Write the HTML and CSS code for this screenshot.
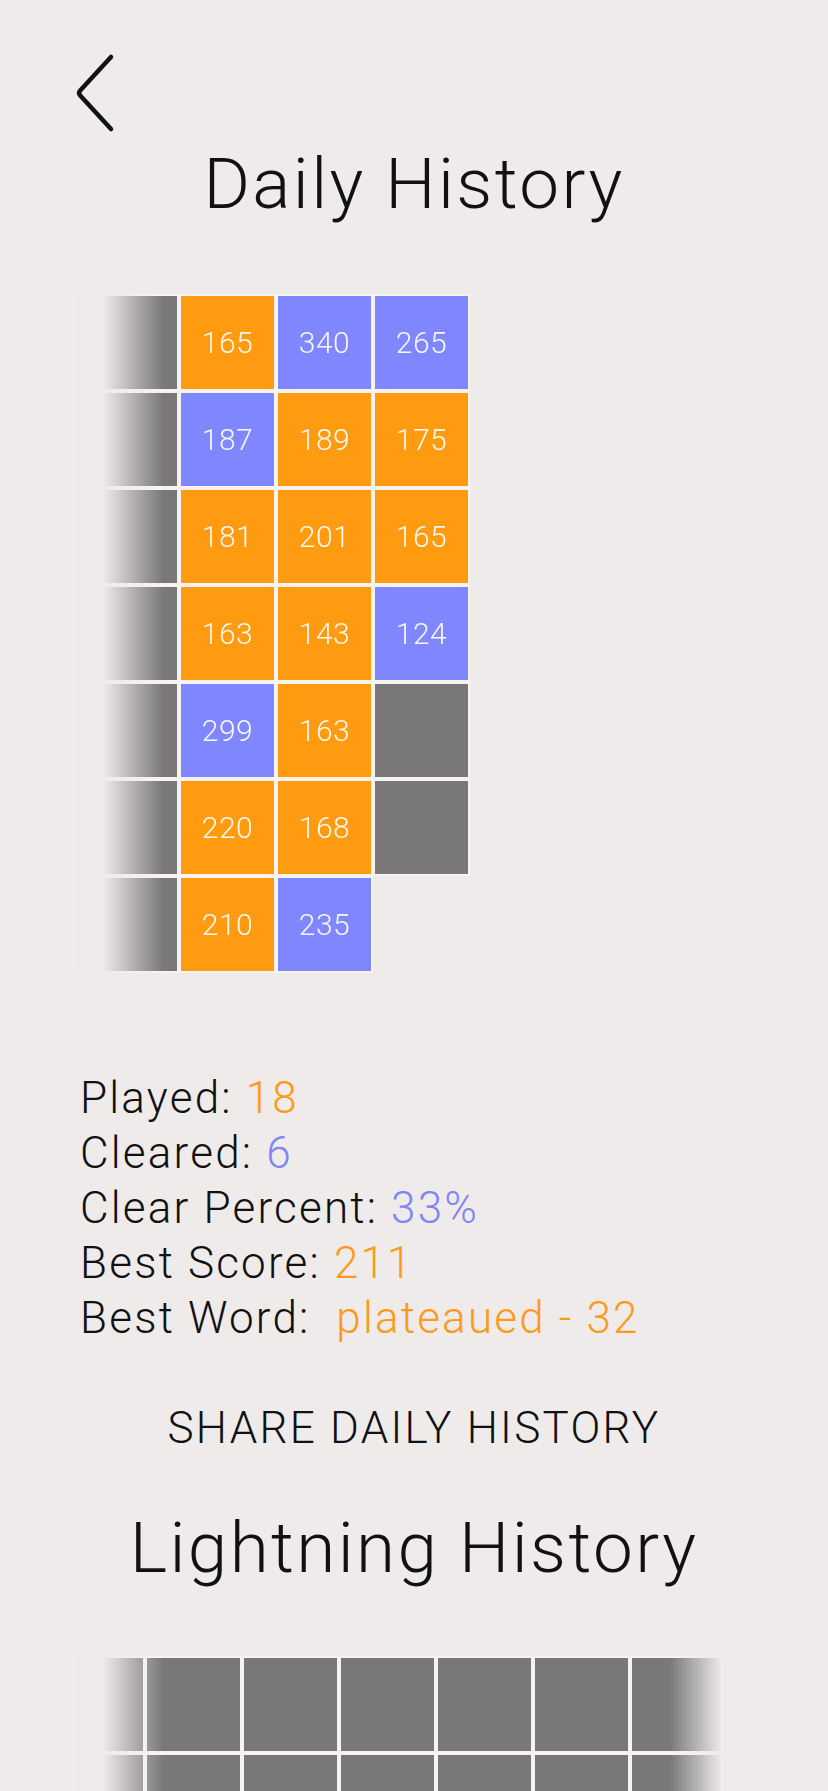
FILE: index.html
```html
<!DOCTYPE html>
<html lang="en">
<head>
<meta charset="utf-8">
<title>Daily History</title>
<link rel="stylesheet" href="styles.css">
</head>
<body>
<div class="screen">
  <div class="topbar">
    <svg class="back" width="50" height="86" viewBox="0 0 50 86" aria-label="Back">
      <path d="M41 7 L10.2 40.6 Q8 43 10.2 45.4 L41 79" fill="none" stroke="#111" stroke-width="4.5" stroke-linecap="round" stroke-linejoin="round"/>
    </svg>
  </div>

  <h1 class="title">Daily History</h1>

  <div class="frame daily">
    <div class="scroller">
      <div class="track">
        <div class="cell g"></div><div class="cell g"></div><div class="cell g"></div><div class="cell g"></div><div class="cell g"></div><div class="cell g"></div><div class="cell g"></div>
        <div class="cell o">165</div><div class="cell b">187</div><div class="cell o">181</div><div class="cell o">163</div><div class="cell b">299</div><div class="cell o">220</div><div class="cell o">210</div>
        <div class="cell b">340</div><div class="cell o">189</div><div class="cell o">201</div><div class="cell o">143</div><div class="cell o">163</div><div class="cell o">168</div><div class="cell b">235</div>
        <div class="cell b">265</div><div class="cell o">175</div><div class="cell o">165</div><div class="cell b">124</div><div class="cell g"></div><div class="cell g"></div><div class="cell e"></div>
      </div>
    </div>
  </div>

  <div class="stats">
    <div class="stat">Played: <span class="orange">18</span></div>
    <div class="stat">Cleared: <span class="blue">6</span></div>
    <div class="stat">Clear Percent: <span class="blue">33%</span></div>
    <div class="stat">Best Score: <span class="orange">211</span></div>
    <div class="stat">Best Word:&nbsp; <span class="orange">plateaued - 32</span></div>
  </div>

  <div class="share">SHARE DAILY HISTORY</div>

  <h2 class="title second">Lightning History</h2>

  <div class="frame lightning">
    <div class="scroller">
      <div class="track shifted">
        <div class="cell g"></div><div class="cell g"></div><div class="cell g"></div><div class="cell g"></div><div class="cell g"></div><div class="cell g"></div><div class="cell g"></div>
        <div class="cell g"></div><div class="cell g"></div><div class="cell g"></div><div class="cell g"></div><div class="cell g"></div><div class="cell g"></div><div class="cell g"></div>
        <div class="cell g"></div><div class="cell g"></div><div class="cell g"></div><div class="cell g"></div><div class="cell g"></div><div class="cell g"></div><div class="cell g"></div>
        <div class="cell g"></div><div class="cell g"></div><div class="cell g"></div><div class="cell g"></div><div class="cell g"></div><div class="cell g"></div><div class="cell g"></div>
        <div class="cell g"></div><div class="cell g"></div><div class="cell g"></div><div class="cell g"></div><div class="cell g"></div><div class="cell g"></div><div class="cell g"></div>
        <div class="cell g"></div><div class="cell g"></div><div class="cell g"></div><div class="cell g"></div><div class="cell g"></div><div class="cell g"></div><div class="cell g"></div>
        <div class="cell g"></div><div class="cell g"></div><div class="cell g"></div><div class="cell g"></div><div class="cell g"></div><div class="cell g"></div><div class="cell g"></div>
        <div class="cell g"></div><div class="cell g"></div><div class="cell g"></div><div class="cell g"></div><div class="cell g"></div><div class="cell g"></div><div class="cell g"></div>
      </div>
    </div>
  </div>
</div>
</body>
</html>
```

FILE: styles.css
```css
html, body {
  margin: 0;
  padding: 0;
  background: #efebea;
}

body {
  font-family: "Roboto", "Liberation Sans", sans-serif;
  font-weight: 300;
  color: #111;
}

.screen {
  width: 828px;
  height: 1791px;
  overflow: hidden;
}

.topbar {
  height: 148px;
  box-sizing: border-box;
  padding: 50px 0 0 70px;
}

.back {
  display: block;
}

.title {
  margin: 0;
  font-size: 71px;
  line-height: 72px;
  font-weight: 300;
  text-align: center;
  letter-spacing: 2.4px;
}

.title.second {
  margin-top: 56px;
}

.frame {
  margin-left: 78px;
  width: 667px;
  border-left: 1px solid rgba(0, 0, 0, 0.025);
}

.frame.daily {
  margin-top: 74px;
}

.frame.lightning {
  margin-top: 72px;
}

.scroller {
  overflow: hidden;
  -webkit-mask-image: linear-gradient(to right, transparent 24px, #000 84px, #000 calc(100% - 76px), transparent calc(100% - 24px));
  mask-image: linear-gradient(to right, transparent 24px, #000 84px, #000 calc(100% - 76px), transparent calc(100% - 24px));
}

.track {
  display: grid;
  grid-template-rows: repeat(7, 97px);
  grid-auto-flow: column;
  grid-auto-columns: 97px;
  padding-left: 3px;
}

.track.shifted {
  padding-left: 0;
  margin-left: -31px;
}

.cell {
  box-sizing: border-box;
  border: 2px solid #f6f3f1;
  display: flex;
  align-items: center;
  justify-content: center;
  font-size: 30px;
  font-weight: 300;
  letter-spacing: 0.5px;
  color: rgba(255, 255, 255, 0.93);
}

.cell.o { background: #fe9b10; }
.cell.b { background: #7f86fe; }
.cell.g { background: #797778; }
.cell.e { background: transparent; border-color: transparent; }

.stats {
  margin-top: 98px;
  padding-left: 80px;
  font-size: 44px;
  line-height: 55px;
  letter-spacing: 2.2px;
}

.orange { color: #fd9a1a; }
.blue { color: #7f86f4; }

.share {
  margin-top: 55px;
  font-size: 44px;
  line-height: 55px;
  text-align: center;
  letter-spacing: 2.3px;
}
```
